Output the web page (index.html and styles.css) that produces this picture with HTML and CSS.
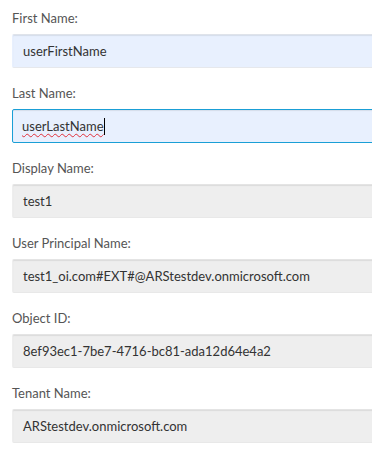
FILE: index.html
```html
<!DOCTYPE html>
<html>
<head>
<meta charset="utf-8">
<link rel="stylesheet" href="styles.css">
</head>
<body>
<form class="form">
  <div class="field">
    <div class="label">First Name:</div>
    <div class="box box-fill">userFirstName</div>
  </div>
  <div class="field">
    <div class="label">Last Name:</div>
    <div class="box box-fill box-focus"><span class="spell">userLastName</span><span class="caret"></span></div>
  </div>
  <div class="field">
    <div class="label">Display Name:</div>
    <div class="box box-ro">test1</div>
  </div>
  <div class="field">
    <div class="label">User Principal Name:</div>
    <div class="box box-ro">test1_oi.com#EXT#@ARStestdev.onmicrosoft.com</div>
  </div>
  <div class="field">
    <div class="label">Object ID:</div>
    <div class="box box-ro">8ef93ec1-7be7-4716-bc81-ada12d64e4a2</div>
  </div>
  <div class="field">
    <div class="label">Tenant Name:</div>
    <div class="box box-ro">ARStestdev.onmicrosoft.com</div>
  </div>
</form>
</body>
</html>
```
FILE: styles.css
```css
html, body {
  margin: 0;
  padding: 0;
  background: #ffffff;
  overflow: hidden;
}
body {
  font-family: Lato, "Open Sans", sans-serif;
  font-size: 13px;
  color: #333333;
}
.form {
  padding: 8px 0 0 12px;
  display: flex;
  flex-direction: column;
}
.field {
  display: flex;
  flex-direction: column;
  gap: 6px;
  margin-bottom: 15px;
}
.label {
  line-height: 20px;
  color: #555555;
}
.box {
  box-sizing: border-box;
  height: 34px;
  width: calc(100% + 10px);
  padding: 0 10px;
  display: flex;
  align-items: center;
  border-radius: 2px;
  border: 1px solid transparent;
  color: #333333;
  white-space: nowrap;
  box-shadow: inset 0 1px 1px rgba(0,0,0,0.08);
}
.box-fill {
  background: #e8f0fe;
  border-top-color: #dfe3ea;
  border-bottom-color: #e6e8ec;
}
.box-ro {
  background: #eeeeee;
  border-top-color: #e4e4e4;
  border-bottom-color: #e8e8e8;
}
.box-focus {
  border: 1px solid #1a9fd6;
  padding-left: 9px;
}
.spell {
  text-decoration: underline wavy #e0303a;
  text-decoration-thickness: 1px;
  text-underline-offset: 2px;
}
.caret {
  display: inline-block;
  width: 1px;
  height: 17px;
  background: #000000;
}
```
